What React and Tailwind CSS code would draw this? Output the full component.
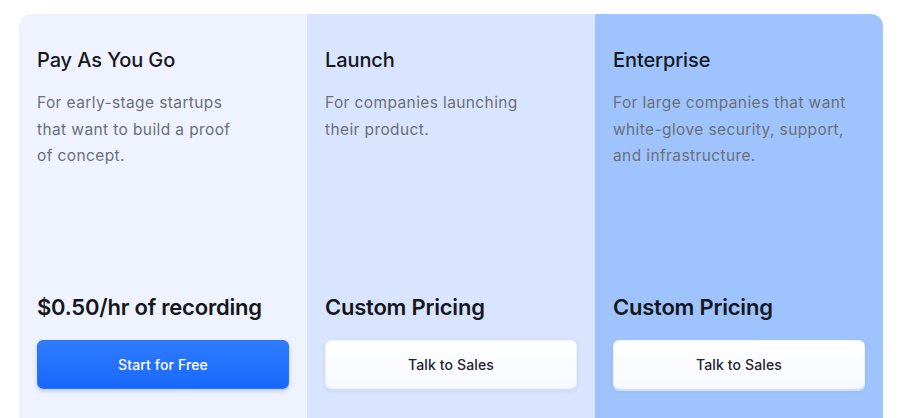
const plans = [
  {
    name: "Pay As You Go",
    lines: ["For early-stage startups", "that want to build a proof", "of concept."],
    price: "$0.50/hr of recording",
    cta: "Start for Free",
    primary: true,
    bg: "bg-[#eef3ff]",
  },
  {
    name: "Launch",
    lines: ["For companies launching", "their product."],
    price: "Custom Pricing",
    cta: "Talk to Sales",
    bg: "bg-[#d9e5fe]",
  },
  {
    name: "Enterprise",
    lines: ["For large companies that want", "white-glove security, support,", "and infrastructure."],
    price: "Custom Pricing",
    cta: "Talk to Sales",
    bg: "bg-[#9fc4fd]",
  },
];

function PlanButton({ primary, children }) {
  if (primary) {
    return (
      <button className="flex h-[49px] w-full items-center justify-center rounded-[6px] border border-[#2a74f5] bg-gradient-to-b from-[#2f7cff] to-[#1767fb] text-[14px] font-medium tracking-[0.01em] text-white shadow-[0_2px_4px_rgba(30,90,200,0.25)]">
        {children}
      </button>
    );
  }
  return (
    <button className="flex h-[49px] w-full items-center justify-center rounded-[6px] border border-[#eef2fb] bg-gradient-to-b from-white to-[#f6f9ff] text-[14px] font-medium tracking-[0.01em] text-[#1f2430] shadow-[0_2px_0_#d3def5,0_2px_4px_rgba(60,90,160,0.12)]">
      {children}
    </button>
  );
}

export default function App() {
  return (
    <div className="min-h-screen bg-white pt-[14px] pl-[19px] font-['Inter',sans-serif]">
      <div className="grid w-[864px] grid-cols-3 overflow-hidden rounded-t-[12px]">
        {plans.map((plan) => (
          <div key={plan.name} className={`${plan.bg} px-[18px] pt-[32px] pb-[60px]`}>
            <h3 className="text-[20px] leading-[28px] font-medium tracking-[-0.005em] text-[#15171c]">
              {plan.name}
            </h3>
            <div className="mt-[16px] h-[202px]">
              <p className="text-[15.5px] leading-[26.5px] tracking-[0.025em] text-[#6b6f78]">
                {plan.lines.map((line) => (
                  <span key={line} className="block">
                    {line}
                  </span>
                ))}
              </p>
            </div>
            <p className="text-[22px] leading-[30px] font-semibold tracking-[-0.01em] text-[#15171c]">
              {plan.price}
            </p>
            <div className="mt-[18px]">
              <PlanButton primary={plan.primary}>{plan.cta}</PlanButton>
            </div>
          </div>
        ))}
      </div>
    </div>
  );
}
